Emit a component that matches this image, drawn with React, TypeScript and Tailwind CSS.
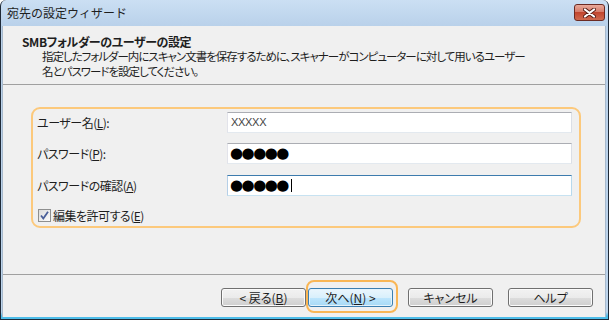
const jp = "font-['Noto_Sans_CJK_JP',sans-serif] [font-feature-settings:'palt']";

const Mn = ({ c }: { c: string }) => <span className="underline underline-offset-[1px]">{c}</span>;

const Field = ({ label, children, focused }: { label: React.ReactNode; children: React.ReactNode; focused?: boolean }) => (
  <div className="flex items-center h-[21px]">
    <div className="w-[190px] text-[12px] tracking-[-0.5px] text-[#1e1e1e]">{label}</div>
    <div
      className={
        "w-[345px] h-[21px] bg-white border flex items-center pl-[2px] " +
        (focused
          ? "border-t-[#3d7bad] border-l-[#b5cfe7] border-r-[#b7d9ed] border-b-[#c7e2f1]"
          : "border-t-[#abadb3] border-l-[#e2e3ea] border-r-[#dbdfe6] border-b-[#e3e9ef]")
      }
    >
      {children}
    </div>
  </div>
);

const Button = ({ children, focused }: { children: React.ReactNode; focused?: boolean }) => (
  <div
    className={
      "w-[85px] h-[19px] rounded-[3px] border flex items-center justify-center text-[12px] text-[#1e1e1e] " +
      (focused
        ? "border-[#3c7fb1] shadow-[inset_0_0_0_1px_#e4f3fc] bg-[linear-gradient(#eaf6fd_0%,#d9f0fc_50%,#bee6fd_50%,#a7d9f5_100%)]"
        : "border-[#707070] shadow-[inset_0_0_0_1px_#fbfbfb] bg-[linear-gradient(#f2f2f2_0%,#ebebeb_50%,#dddddd_50%,#cfcfcf_100%)]")
    }
  >
    {children}
  </div>
);

const Dots = () => (
  <span className="font-['DejaVu_Sans',sans-serif] text-[15px] leading-none tracking-[-1.5px] text-black">●●●●●</span>
);

export default function App() {
  return (
    <div className={"w-[609px] h-[320px] flex flex-col rounded-t-[6px] overflow-hidden border-l border-r border-b border-[#1f2a38] bg-[linear-gradient(#cbdff3_0px,#b9d1ea_26px,#bcd4ec_312px,#4dbde9_316px)] " + jp}>
      {/* Title bar */}
      <div className="h-[26px] flex items-center justify-between pl-[6px] pr-[3px]">
        <span className="text-[12px] text-[#1e1e1e] [font-feature-settings:normal]">宛先の設定ウィザード</span>
        <div className="w-[31px] h-[17px] mb-[1px] rounded-[3px] border border-[#6b2a22] bg-[linear-gradient(#e9a99a_0%,#d47866_50%,#c2462f_50%,#cf6a4f_100%)] flex items-center justify-center">
          <svg width="13" height="10" viewBox="0 0 13 10">
            <path d="M2 1.5 L11 8.5 M11 1.5 L2 8.5" stroke="#5a2018" strokeWidth="4" strokeLinecap="round" />
            <path d="M2 1.5 L11 8.5 M11 1.5 L2 8.5" stroke="#ffffff" strokeWidth="2.2" strokeLinecap="round" />
          </svg>
        </div>
      </div>

      {/* Body */}
      <div className="flex-1 flex flex-col bg-[#f0f0f0] ml-[1px] mr-[2px] mb-[2px] border-l border-r border-[#a7b9cc]">
        {/* Header */}
        <div className="h-[58px] pt-[8px] pl-[19px] text-[#1e1e1e]">
          <div className="text-[12px] leading-[15px] font-bold tracking-[-0.4px]">SMBフォルダーのユーザーの設定</div>
          <div className="ml-[20px] text-[11.5px] leading-[15px] tracking-[-1px]">
            <div>指定したフォルダー内にスキャン文書を保存するために、スキャナーがコンピューターに対して用いるユーザー</div>
            <div>名とパスワードを設定してください。</div>
          </div>
        </div>
        <div className="h-[1px] bg-[#a0a0a0]" />

        {/* Main */}
        <div className="h-[189px] pt-[22px] pl-[28px]">
          <div className="w-[550px] h-[121px] border-2 border-[#fcc97c] rounded-[9px] pl-[4px] pt-[3px]">
            <Field label={<>ユーザー名(<Mn c="L" />):</>}>
              <span className="font-['Liberation_Sans',sans-serif] text-[11px] text-[#444] ml-[1px] tracking-[-0.3px]">XXXXX</span>
            </Field>
            <div className="mt-[10px]">
              <Field label={<>パスワード(<Mn c="P" />):</>}>
                <Dots />
              </Field>
            </div>
            <div className="mt-[11px]">
              <Field focused label={<>パスワードの確認(<Mn c="A" />)</>}>
                <Dots />
                <span className="w-[1px] h-[13px] bg-black ml-[3px]" />
              </Field>
            </div>
            <div className="mt-[12px] flex items-center h-[15px] ml-[1px]">
              <div className="w-[13px] h-[13px] border border-[#8e8f8f] bg-[linear-gradient(135deg,#dcdcdc,#fbfbfb)] flex items-center justify-center">
                <svg width="11" height="11" viewBox="0 0 11 11">
                  <path d="M2 5.5 L4.3 8.5 L9 1.8" fill="none" stroke="#4a5f99" strokeWidth="1.8" />
                </svg>
              </div>
              <span className="ml-[2px] text-[12px] tracking-[-0.5px] text-[#1e1e1e]">編集を許可する(<Mn c="E" />)</span>
            </div>
          </div>
        </div>
        <div className="h-[1px] bg-[#a0a0a0]" />

        {/* Footer */}
        <div className="flex-1 flex justify-end items-start pt-[13px] pr-[12px]">
          <Button>&lt; 戻る(<Mn c="B" />)</Button>
          <div className="relative ml-[2px]">
            <div className="absolute -left-[2px] -right-[5px] -top-[8px] -bottom-[6px] border-2 border-[#f9b655] rounded-[8px]" />
            <Button focused>次へ(<Mn c="N" />) &gt;</Button>
          </div>
          <div className="ml-[15px]">
            <Button>キャンセル</Button>
          </div>
          <div className="ml-[15px]">
            <Button>ヘルプ</Button>
          </div>
        </div>
      </div>
    </div>
  );
}
